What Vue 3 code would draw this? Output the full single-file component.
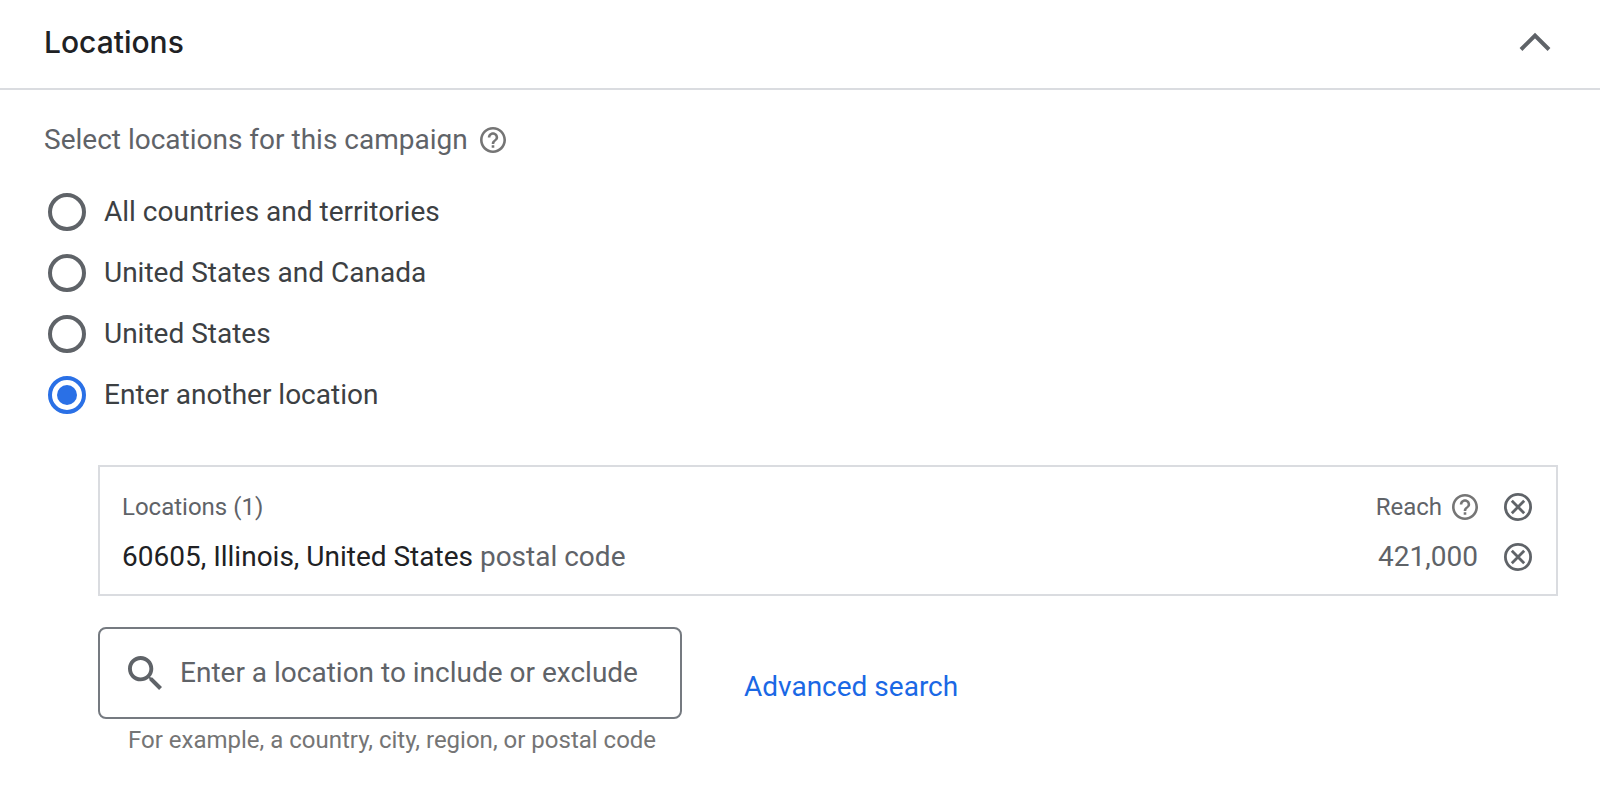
<script setup>
import { ref } from 'vue'

const expanded = ref(true)
const selected = ref('other')
const query = ref('')

const options = [
  { value: 'all', label: 'All countries and territories' },
  { value: 'us-ca', label: 'United States and Canada' },
  { value: 'us', label: 'United States' },
  { value: 'other', label: 'Enter another location' },
]

const locations = ref([
  { id: 60605, name: '60605, Illinois, United States', kind: 'postal code', reach: '421,000' },
])

function removeLocation(id) {
  locations.value = locations.value.filter((item) => item.id !== id)
}
</script>

<template>
  <section class="panel">
    <header class="panel-header">
      <h2 class="panel-title">Locations</h2>
      <button
        class="icon-button"
        type="button"
        aria-label="Collapse section"
        :aria-expanded="expanded"
        @click="expanded = !expanded"
      >
        <svg class="chevron" viewBox="0 0 32 20" aria-hidden="true">
          <path d="M2 17.5 16 3.5l14 14" fill="none" stroke="currentColor" stroke-width="4" />
        </svg>
      </button>
    </header>

    <div v-if="expanded" class="panel-body">
      <div class="prompt">
        <span id="prompt-text">Select locations for this campaign</span>
        <button class="icon-button help" type="button" aria-label="Help on locations">
          <svg class="help-icon" viewBox="2 2 20 20" aria-hidden="true">
            <path
              fill="currentColor"
              d="M11 18h2v-2h-2v2zm1-16C6.48 2 2 6.48 2 12s4.48 10 10 10 10-4.48 10-10S17.52 2 12 2zm0 18c-4.41 0-8-3.59-8-8s3.59-8 8-8 8 3.59 8 8-3.59 8-8 8zm0-14c-2.21 0-4 1.79-4 4h2c0-1.1.9-2 2-2s2 .9 2 2c0 2-3 1.75-3 5h2c0-2.25 3-2.5 3-5 0-2.21-1.79-4-4-4z"
            />
          </svg>
        </button>
      </div>

      <div class="options" role="radiogroup" aria-labelledby="prompt-text">
        <label v-for="option in options" :key="option.value" class="option">
          <input v-model="selected" class="radio" type="radio" name="location" :value="option.value" />
          <span class="option-text">{{ option.label }}</span>
        </label>
      </div>

      <div class="details">
        <div class="table-box">
          <table class="table">
            <thead>
              <tr>
                <th class="cell-name" scope="col">Locations ({{ locations.length }})</th>
                <th class="cell-reach" scope="col">
                  <span class="reach-head">
                    Reach
                    <button class="icon-button help" type="button" aria-label="Help on reach">
                      <svg class="help-icon" viewBox="2 2 20 20" aria-hidden="true">
                        <path
                          fill="currentColor"
                          d="M11 18h2v-2h-2v2zm1-16C6.48 2 2 6.48 2 12s4.48 10 10 10 10-4.48 10-10S17.52 2 12 2zm0 18c-4.41 0-8-3.59-8-8s3.59-8 8-8 8 3.59 8 8-3.59 8-8 8zm0-14c-2.21 0-4 1.79-4 4h2c0-1.1.9-2 2-2s2 .9 2 2c0 2-3 1.75-3 5h2c0-2.25 3-2.5 3-5 0-2.21-1.79-4-4-4z"
                        />
                      </svg>
                    </button>
                  </span>
                </th>
                <th class="cell-action" scope="col">
                  <button class="icon-button" type="button" aria-label="Remove all" @click="locations = []">
                    <svg class="remove-icon" viewBox="0 0 28 28" aria-hidden="true">
                      <g fill="none" stroke="currentColor" stroke-width="2.8">
                        <circle cx="14" cy="14" r="12.6" />
                        <path d="m7.800 7.800 12.400 12.400M20.200 7.800 7.800 20.200" />
                      </g>
                    </svg>
                  </button>
                </th>
              </tr>
            </thead>
            <tbody>
              <tr v-for="item in locations" :key="item.id">
                <td class="cell-name">
                  {{ item.name }} <span class="kind">{{ item.kind }}</span>
                </td>
                <td class="cell-reach">{{ item.reach }}</td>
                <td class="cell-action">
                  <button
                    class="icon-button"
                    type="button"
                    :aria-label="'Remove ' + item.name"
                    @click="removeLocation(item.id)"
                  >
                    <svg class="remove-icon" viewBox="0 0 28 28" aria-hidden="true">
                      <g fill="none" stroke="currentColor" stroke-width="2.8">
                        <circle cx="14" cy="14" r="12.6" />
                        <path d="m7.800 7.800 12.400 12.400M20.200 7.800 7.800 20.200" />
                      </g>
                    </svg>
                  </button>
                </td>
              </tr>
            </tbody>
          </table>
        </div>

        <div class="search-row">
          <div class="search">
            <label class="search-box">
              <svg class="search-icon" viewBox="3 3 17.49 17.49" aria-hidden="true">
                <path
                  fill="currentColor"
                  d="M15.5 14h-.79l-.28-.27C15.41 12.59 16 11.11 16 9.5 16 5.91 13.09 3 9.5 3S3 5.91 3 9.5 5.91 16 9.5 16c1.61 0 3.09-.59 4.23-1.57l.27.28v.79l5 4.99L20.49 19l-4.99-5zm-6 0C7.01 14 5 11.99 5 9.5S7.01 5 9.5 5 14 7.01 14 9.5 11.99 14 9.5 14z"
                />
              </svg>
              <input
                v-model="query"
                class="search-input"
                type="text"
                aria-label="Location"
                aria-describedby="search-hint"
                placeholder="Enter a location to include or exclude"
              />
            </label>
            <p id="search-hint" class="hint">For example, a country, city, region, or postal code</p>
          </div>
          <a class="advanced" href="#">Advanced search</a>
        </div>
      </div>
    </div>
  </section>
</template>

<style scoped>
.panel {
  font-family: Roboto, "Liberation Sans", sans-serif;
  font-size: 28px;
  line-height: 32px;
  color: #3c4043;
}

.panel-header {
  display: flex;
  align-items: center;
  justify-content: space-between;
  padding: 22px 49px 26px 44px;
  border-bottom: 2px solid #dadce0;
}

.panel-title {
  margin: 0;
  font-family: Inter, Roboto, sans-serif;
  font-size: 30px;
  font-weight: 500;
  line-height: 40px;
  color: #202124;
}

.icon-button {
  display: flex;
  padding: 0;
  border: 0;
  background: none;
  color: #5f6368;
  cursor: pointer;
}

.chevron {
  width: 32px;
  height: 20px;
}

.help {
  color: #757575;
}

.help-icon {
  width: 26px;
  height: 26px;
}

.panel-body {
  padding: 32px 42px 32px 44px;
}

.prompt {
  display: flex;
  align-items: center;
  gap: 12px;
  height: 36px;
  color: #5f6368;
}

.options {
  display: flex;
  flex-direction: column;
  gap: 20px;
  padding-top: 35px;
  padding-left: 4px;
}

.option {
  display: flex;
  align-self: flex-start;
  gap: 18px;
  height: 41px;
  cursor: pointer;
}

.option-text {
  line-height: 38px;
}

.radio {
  appearance: none;
  display: grid;
  place-items: center;
  width: 38px;
  height: 38px;
  margin: 0;
  box-sizing: border-box;
  border: 4px solid #5f6368;
  border-radius: 50%;
}

.radio:checked {
  border-color: #2a70e6;
}

.radio:checked::before {
  content: "";
  width: 20px;
  height: 20px;
  border-radius: 50%;
  background: #2a70e6;
}

.details {
  padding: 48px 0 0 54px;
}

.table-box {
  padding: 15px 24px 12px 22px;
  border: 2px solid #dadce0;
}

.table {
  width: 100%;
  border-collapse: collapse;
}

.table th,
.table td {
  height: 50px;
  padding: 0;
  font-weight: 400;
  vertical-align: middle;
}

.table th {
  font-size: 24px;
  color: #5f6368;
}

.cell-name {
  text-align: left;
  color: #202124;
}

.kind {
  color: #5f6368;
}

.table .cell-reach {
  width: 160px;
  text-align: right;
  color: #5f6368;
}

.reach-head {
  display: flex;
  align-items: center;
  justify-content: flex-end;
  gap: 10px;
}

.table .cell-action {
  width: 54px;
}

.cell-action .icon-button {
  margin-left: auto;
}

.remove-icon {
  width: 28px;
  height: 28px;
}

.search-row {
  display: flex;
  gap: 62px;
  padding-top: 31px;
}

.search {
  width: 584px;
}

.search-box {
  display: flex;
  align-items: center;
  gap: 18px;
  height: 92px;
  padding: 0 28px;
  box-sizing: border-box;
  border: 2px solid #757a80;
  border-radius: 8px;
}

.search-icon {
  flex: none;
  width: 34px;
  height: 34px;
  color: #5f6368;
}

.search-input {
  flex: 1;
  min-width: 0;
  padding: 0;
  border: 0;
  outline: 0;
  background: none;
  font: inherit;
  color: #3c4043;
}

.search-input::placeholder {
  color: #5f6368;
  opacity: 1;
}

.hint {
  margin: 0;
  padding: 5px 0 0 30px;
  font-size: 24px;
  white-space: nowrap;
  color: #757575;
}

.advanced {
  padding-top: 44px;
  color: #1a68e5;
  text-decoration: none;
}
</style>

<style>
body {
  background: #fff;
}
</style>
